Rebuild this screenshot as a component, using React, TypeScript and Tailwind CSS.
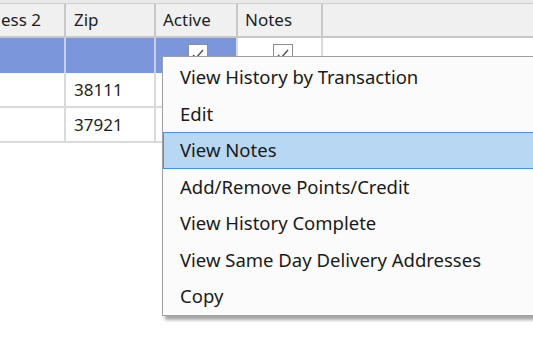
import React from "react";

const font = { fontFamily: '"Noto Sans", "Open Sans", sans-serif' };

function Check() {
  return (
    <div className="w-[20px] h-[20px] bg-white border border-[#8f8f8f] flex items-center justify-center">
      <svg width="14" height="14" viewBox="0 0 14 14">
        <path d="M2 8 L5 11 L12 3" stroke="#555" strokeWidth="1.5" fill="none" />
      </svg>
    </div>
  );
}

const items = [
  "View History by Transaction",
  "Edit",
  "View Notes",
  "Add/Remove Points/Credit",
  "View History Complete",
  "View Same Day Delivery Addresses",
  "Copy",
];

export default function App() {
  const cols = "grid grid-cols-[66px_90px_82px_85px_1fr]";
  return (
    <div className="relative w-[533px] h-[338px] bg-white overflow-hidden text-[#1e1e1e]" style={font}>
      <div className="h-[4px] bg-[#e9e9e9] border-b border-[#d0d0d0]" />
      {/* header */}
      <div className={`${cols} h-[34px] bg-[#f0f0f0] border-b-2 border-[#c8c8c8] text-[17px]`}>
        <div className="border-r-2 border-[#c8c8c8] flex items-center pl-[1px]">ess 2</div>
        <div className="border-r-2 border-[#c8c8c8] flex items-center pl-[8px]">Zip</div>
        <div className="border-r-2 border-[#c8c8c8] flex items-center pl-[7px]">Active</div>
        <div className="border-r-2 border-[#c8c8c8] flex items-center pl-[7px]">Notes</div>
        <div />
      </div>
      {/* row 1 */}
      <div className={`${cols} h-[35px] text-[17px]`}>
        <div className="bg-[#7c96db] border-r-2 border-[#c5d0ee]" />
        <div className="bg-[#7c96db] border-r-2 border-[#c5d0ee]" />
        <div className="bg-[#7c96db] border-r-2 border-[#dadada] flex justify-center pt-[6px] pl-[4px]">
          <Check />
        </div>
        <div className="border-r-2 border-[#dadada] flex justify-center pt-[6px] pl-[6px]">
          <Check />
        </div>
        <div className="border-b-2 border-[#dadada]" />
      </div>
      {/* row 2 */}
      <div className={`${cols} h-[35px] text-[17px]`}>
        <div className="border-r-2 border-b-2 border-[#dadada]" />
        <div className="border-r-2 border-b-2 border-[#dadada] flex items-center pl-[8px]">38111</div>
        <div className="border-r-2 border-b-2 border-[#dadada]" />
        <div />
        <div />
      </div>
      {/* row 3 */}
      <div className={`${cols} h-[35px] text-[17px]`}>
        <div className="border-r-2 border-b-2 border-[#dadada]" />
        <div className="border-r-2 border-b-2 border-[#dadada] flex items-center pl-[8px]">37921</div>
        <div className="border-r-2 border-b-2 border-[#dadada]" />
        <div />
        <div />
      </div>

      {/* context menu */}
      <div className="absolute left-[162px] top-[56px] w-[400px] bg-[#fbfbfb] border border-[#a0a0a0] pt-[2px] shadow-[3px_4px_3px_rgba(0,0,0,0.35)]">
        {items.map((t, i) => (
          <div
            key={t}
            className={
              i === 2
                ? "h-[36.5px] flex items-center pl-[16px] text-[18.5px] text-[#1a1a1a] bg-[#b7d7f3] border border-[#4a92dc]"
                : "h-[36.5px] flex items-center pl-[16px] text-[18.5px] text-[#1a1a1a] border border-transparent"
            }
          >
            {t}
          </div>
        ))}
      </div>
    </div>
  );
}
